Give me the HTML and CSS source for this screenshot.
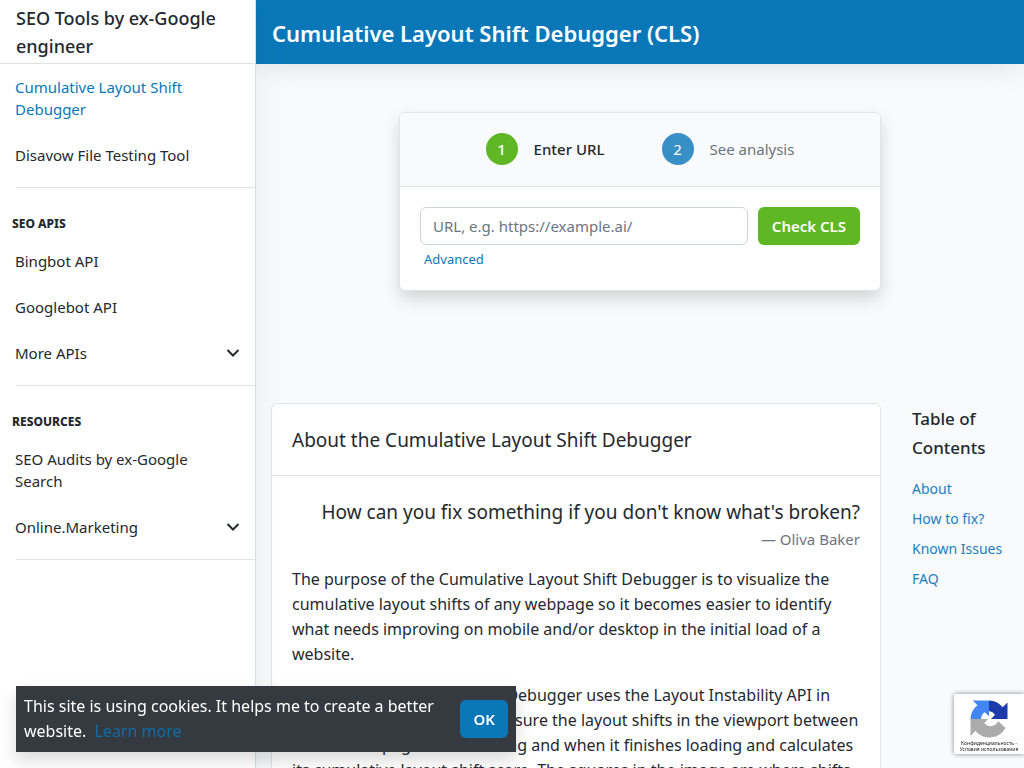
FILE: index.html
```html
<!DOCTYPE html>
<html lang="en">
<head>
<meta charset="utf-8">
<meta name="viewport" content="width=device-width, initial-scale=1">
<title>Cumulative Layout Shift Debugger (CLS)</title>
<link rel="stylesheet" href="styles.css">
</head>
<body>
<div class="app">
  <aside class="sidebar">
    <div class="brand"><a href="#">SEO Tools by ex-Google engineer</a></div>
    <nav class="nav">
      <div class="nav-group">
        <a class="nav-link active" href="#">Cumulative Layout Shift Debugger</a>
        <a class="nav-link" href="#">Disavow File Testing Tool</a>
      </div>
      <div class="nav-group">
        <h2 class="nav-title">SEO APIs</h2>
        <a class="nav-link" href="#">Bingbot API</a>
        <a class="nav-link" href="#">Googlebot API</a>
        <button class="nav-link" type="button"><span>More APIs</span>
          <svg class="chevron" viewBox="0 0 14 10" aria-hidden="true"><path d="M1.500 2 7 7.500 12.500 2"/></svg></button>
      </div>
      <div class="nav-group">
        <h2 class="nav-title">Resources</h2>
        <a class="nav-link" href="#">SEO Audits by ex-Google Search</a>
        <button class="nav-link" type="button"><span>Online.Marketing</span>
          <svg class="chevron" viewBox="0 0 14 10" aria-hidden="true"><path d="M1.500 2 7 7.500 12.500 2"/></svg></button>
      </div>
    </nav>
  </aside>
  <div class="page">
    <header class="topbar"><h1>Cumulative Layout Shift Debugger (CLS)</h1></header>
    <main>
      <section class="tool-area">
        <div class="card tool">
          <ol class="steps">
            <li class="step current"><span class="dot">1</span><span>Enter URL</span></li>
            <li class="step"><span class="dot">2</span><span>See analysis</span></li>
          </ol>
          <form class="tool-form">
            <div class="field-row">
              <input class="url" type="text" aria-label="URL" placeholder="URL, e.g. https://example.ai/">
              <button class="btn green" type="button">Check CLS</button>
            </div>
            <a class="advanced" href="#">Advanced</a>
          </form>
        </div>
      </section>
      <div class="columns">
        <article class="card about">
          <h2 class="about-title" id="about">About the Cumulative Layout Shift Debugger</h2>
          <div class="about-body">
            <blockquote class="quote">
              <p>How can you fix something if you don't know what's broken?</p>
              <footer>— Oliva Baker</footer>
            </blockquote>
            <p>The purpose of the Cumulative Layout Shift Debugger is to visualize the cumulative layout shifts of any webpage so it becomes easier to identify what needs improving on mobile and/or desktop in the initial load of a website.</p>
            <p>The Cumulative Layout Shift Debugger uses the Layout Instability API in Chromium browsers and measure the layout shifts in the viewport between when a webpage starts loading and when it finishes loading and calculates its cumulative layout shift score. The squares in the image are where shifts</p>
          </div>
        </article>
        <nav class="toc" aria-label="Table of Contents">
          <h2>Table of Contents</h2>
          <a href="#about">About</a>
          <a href="#">How to fix?</a>
          <a href="#">Known Issues</a>
          <a href="#">FAQ</a>
        </nav>
      </div>
    </main>
  </div>
</div>
<div class="cookie" role="region" aria-label="Cookies">
  <p>This site is using cookies. It helps me to create a better website. <a href="#">Learn more</a></p>
  <button class="btn blue" type="button">OK</button>
</div>
<div class="captcha">
  <svg viewBox="0 0 40 40" aria-hidden="true">
    <path fill="#1c3aa9" d="M38.500 20V3.500l-4.800 4.800A18 18 0 0 0 20 1.500V12a9 9 0 0 1 6 3.800L22 20z"/>
    <path fill="#4285f4" d="M20 1.500H3.800l4.700 4.700A18 18 0 0 0 1.500 20H12c.3-3.600 1.600-5.800 3.900-6.800l4.100 4z"/>
    <path fill="#ababab" d="M1.500 20v17l4.900-4.900A18.500 18.500 0 0 0 36.500 29l-7.300-6.700c-2 4.800-9.400 7.200-14 1.700l4-4z"/>
  </svg>
  <p><a href="#">Конфиденциальность</a> - <a href="#">Условия использования</a></p>
</div>
</body>
</html>
```
FILE: styles.css
```css
* { box-sizing: border-box; }
body {
  margin: 0;
  height: 100vh;
  overflow: hidden;
  background: #f8fafc;
  color: #24292e;
  font: 16px/25px "Noto Sans", "Open Sans", sans-serif;
}
h1, h2, p, ol, blockquote { margin: 0; padding: 0; }
a { color: #0a78b8; text-decoration: none; }
button { font: inherit; cursor: pointer; }

.app { display: flex; height: 100vh; overflow: hidden; }
.sidebar {
  flex: 0 0 256px;
  background: #fff;
  border-right: 1px solid #d8dde0;
  box-shadow: 0 0 32px rgba(0, 0, 0, .06);
  z-index: 2;
}
.brand {
  height: 64px;
  padding: 4px 16px 0;
  border-bottom: 1px solid #e1e1e1;
  font-size: 18px;
  line-height: 28px;
  font-weight: 500;
}
.brand a { color: #24292e; }
.nav-group {
  margin-left: 16px;
  padding-bottom: 9px;
  border-bottom: 1px solid #e1e5e5;
}
.nav-title {
  margin-left: -4px;
  padding: 25px 0 3px;
  font-size: 12px;
  line-height: 22px;
  font-weight: 800;
  text-transform: uppercase;
}
.nav-link {
  display: flex;
  justify-content: space-between;
  align-items: center;
  width: 100%;
  margin-left: -1px;
  padding: 12px 32px 12px 0;
  border: 0;
  background: none;
  color: #24292e;
  font-size: 15px;
  line-height: 22px;
  font-weight: 400;
  text-align: left;
}
button.nav-link { padding-right: 14px; }
.nav-link.active { color: #0a78b8; }
.chevron { width: 14px; height: 10px; fill: none; stroke: #24292e; stroke-width: 2; }

.page { flex: 1; min-width: 0; }
.topbar {
  height: 64px;
  padding: 0 16px;
  background: #0a78b8;
  color: #fff;
  box-shadow: 0 0 32px rgba(0, 0, 0, .12);
}
.topbar h1 { font-size: 22px; line-height: 67px; font-weight: 600; }
.card { background: #fff; border: 1px solid #e1e4e6; border-radius: 6px; }
.tool-area { padding: 48px 15px 112px; }
.tool {
  max-width: 482px;
  margin: 0 auto;
  overflow: hidden;
  box-shadow: 0 8px 16px rgba(0, 0, 0, .15);
  font-size: 15px;
}
.steps {
  display: flex;
  justify-content: center;
  gap: 57px;
  padding: 20px;
  border-bottom: 1px solid #e1e4e6;
  background: #f8fafc;
  list-style: none;
}
.step { display: flex; align-items: flex-start; gap: 16px; color: #6c757d; line-height: 33px; }
.step.current { color: #24292e; font-weight: 500; }
.dot {
  width: 32px;
  height: 32px;
  border-radius: 50%;
  background: #378fc5;
  color: #fff;
  line-height: 32px;
  text-align: center;
}
.current .dot { background: #5fb723; }
.tool-form { padding: 20px 20px 18px; }
.field-row { display: flex; gap: 10px; }
.url {
  flex: 1;
  min-width: 0;
  height: 38px;
  padding: 0 12px;
  border: 1px solid #cfd3dc;
  border-radius: 6px;
  background: #fff;
  font: inherit;
}
.url::placeholder { color: #6c757d; opacity: 1; }
.btn {
  height: 38px;
  padding: 0 14px;
  border: 0;
  border-radius: 6px;
  color: #fff;
  font-size: 15px;
  font-weight: 600;
}
.green { background: #5fb723; }
.blue { padding: 0 13px; background: #0a78b8; }
.advanced { display: inline-block; margin: 2px 4px 0; font-size: 13px; }

.columns { display: grid; grid-template-columns: 5fr 1fr; }
.about { margin: 0 15px; }
.about-title {
  padding: 22px 20px 21px;
  border-bottom: 1px solid #e1e4e6;
  font-size: 19px;
  line-height: 28px;
  font-weight: 400;
}
.about-body { padding: 21px 20px; }
.about-body > p { margin-bottom: 16px; }
.quote { margin-bottom: 16px; text-align: right; }
.quote p { font-size: 19px; line-height: 30px; }
.quote footer { color: #6c757d; font-size: 15px; line-height: 24px; }
.toc { padding: 1px 16px; }
.toc h2 { margin-bottom: 12px; font-size: 17px; line-height: 29px; font-weight: 500; }
.toc a { display: block; font-size: 14px; line-height: 30px; white-space: nowrap; color: #1b80bf; }

.cookie {
  position: fixed;
  left: 16px;
  bottom: 16px;
  z-index: 3;
  display: flex;
  align-items: center;
  gap: 8px;
  width: 500px;
  max-width: calc(100% - 32px);
  padding: 8px;
  background: #343a40;
  color: #fff;
  box-shadow: 0 8px 16px rgba(0, 0, 0, .15);
}
.cookie p { flex: 1; }
.cookie p a { margin-left: 4px; color: #0f6da5; }
.captcha {
  position: fixed;
  right: 0;
  bottom: 14px;
  z-index: 3;
  width: 70px;
  height: 60px;
  padding-top: 5px;
  border-radius: 2px 0 0 2px;
  background: #fff;
  box-shadow: 0 0 5px #808080;
  text-align: center;
}
.captcha svg { display: block; width: 40px; height: 40px; margin: 0 auto; }
.captcha p { margin-top: 1px; font-size: 5px; line-height: 6px; }
.captcha a { color: #222; }
```
